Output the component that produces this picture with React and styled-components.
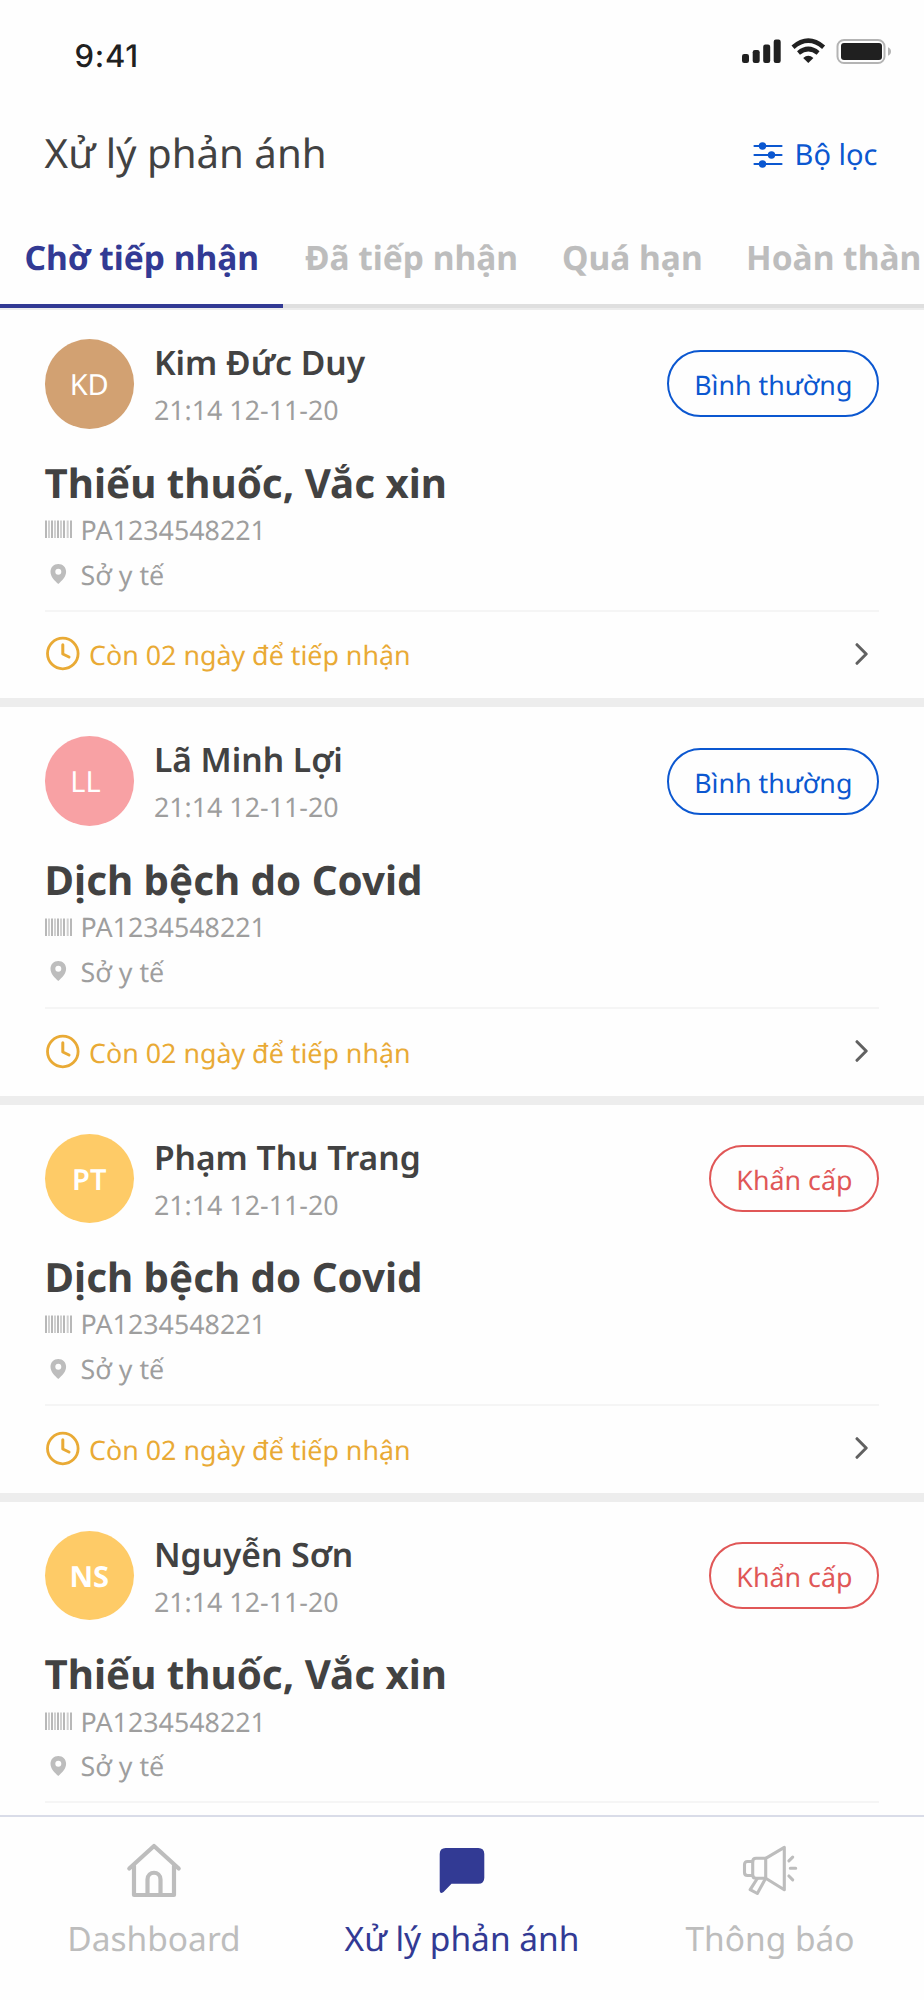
import styled, { createGlobalStyle } from "styled-components"

const GlobalStyle = createGlobalStyle`
    * {
        box-sizing: border-box;
    }

    body {
        margin: 0;
        background: #ffffff;
        font-family: "Noto Sans", "Open Sans", sans-serif;
        color: #424242;
        text-rendering: geometricPrecision;
    }
`

const Screen = styled.div`
    width: 924px;
    height: 2000px;
    display: flex;
    flex-direction: column;
    overflow: hidden;
    background: #fefefe;
`

const StatusBar = styled.div`
    height: 98px;
    flex: none;
    display: flex;
    justify-content: space-between;
    padding: 36px 31px 0 74.5px;
`

const Clock = styled.div`
    font-family: Inter, "Liberation Sans", sans-serif;
    font-size: 31px;
    font-weight: 500;
    line-height: 42px;
    letter-spacing: 0.8px;
    color: #202020;
`

const StatusIcons = styled.svg`
    width: 151px;
    height: 28px;
    display: block;
`

const Header = styled.header`
    height: 112px;
    flex: none;
    display: flex;
    align-items: flex-start;
    justify-content: space-between;
    padding: 25px 46.5px 0 44.6px;
`

const PageTitle = styled.h1`
    margin: 0;
    font-size: 40.2px;
    font-weight: 400;
    line-height: 59px;
`

const FilterButton = styled.div`
    display: flex;
    align-items: center;
    gap: 12px;
    padding-top: 3px;
    font-size: 29px;
    line-height: 58px;
    color: #0b57d0;
`

const Tabs = styled.nav`
    height: 100.3px;
    flex: none;
    display: flex;
    border-bottom: 2px solid #ececec;
    white-space: nowrap;
`

const Tab = styled.div`
    flex: none;
    height: 98px;
    padding: ${({ $active }) => ($active ? "22px 23px 0 24.5px" : "22px 21px 0 22px")};
    width: ${({ $width }) => $width}px;
    border-bottom: 4px solid ${({ $active }) => ($active ? "#323a94" : "#dfdfdf")};
    font-size: 33.5px;
    font-weight: 700;
    line-height: 50px;
    color: ${({ $active }) => ($active ? "#323a94" : "#bdbdbd")};
`

const List = styled.main`
    flex: 1;
    min-height: 0;
    overflow: hidden;
`

const Card = styled.article`
    height: 397.2px;
    padding: 29px 44.6px 0;
    border-bottom: 9px solid #ededed;
`

const CardHead = styled.div`
    display: flex;
    height: 89.3px;
`

const Avatar = styled.div`
    width: 89.3px;
    height: 89.3px;
    border-radius: 50%;
    background: ${({ $color }) => $color};
    font-size: 29px;
    font-weight: ${({ $weight }) => $weight};
    line-height: 92px;
    text-align: center;
    white-space: pre;
    color: #ffffff;
`

const Person = styled.div`
    flex: 1;
    padding-left: 20px;
`

const Name = styled.div`
    font-size: 33.6px;
    font-weight: 600;
    line-height: 47px;
`

const Time = styled.div`
    font-size: 26.8px;
    line-height: 48px;
    color: #9e9e9e;
`

const Badge = styled.div`
    align-self: center;
    height: 67px;
    padding: 0 25px;
    border: 2px solid ${({ $urgent }) => ($urgent ? "#e05757" : "#0b57d0")};
    border-radius: 34px;
    font-size: 26.8px;
    line-height: 65px;
    color: ${({ $urgent }) => ($urgent ? "#e05757" : "#0b57d0")};
`

const Subject = styled.h2`
    margin: 25px 0 0;
    font-size: 40.3px;
    font-weight: 700;
    line-height: 58px;
`

const MetaList = styled.div`
    height: 98.3px;
    margin-top: -4px;
`

const Meta = styled.div`
    display: flex;
    align-items: center;
    height: 44.8px;
    font-size: 26.8px;
    line-height: 44px;
    color: #9e9e9e;
`

const MetaIcon = styled.svg`
    flex: none;
    width: 27px;
    height: 20px;
    margin: 0 9px 1px 0;
`

const CardFoot = styled.div`
    height: 88px;
    margin-top: 4px;
    padding-right: 10px;
    padding-bottom: 2px;
    display: flex;
    align-items: center;
    border-top: 2px solid #f5f5f5;
    font-size: 26.8px;
    color: #e9aa35;
`

const FootIcon = styled.svg`
    flex: none;
    width: 35px;
    height: 35px;
`

const Deadline = styled.span`
    flex: 1;
    padding: 2px 0 0 9.5px;
`

const BottomNav = styled.footer`
    height: 185px;
    flex: none;
    display: grid;
    grid-template-columns: 1fr 1fr 1fr;
    border-top: 2px solid #d9dce8;
`

const NavItem = styled.div`
    display: flex;
    flex-direction: column;
    align-items: center;
    padding-top: 25px;
    font-size: 33.48px;
    line-height: 50px;
    color: ${({ $active }) => ($active ? "#323a94" : "#bdbdbd")};
`

const NavIcon = styled.svg`
    width: 60px;
    height: 60px;
    margin-bottom: 11px;
`

const tabs = [
    { name: "Chờ tiếp nhận", width: 283, active: true },
    { name: "Đã tiếp nhận", width: 257 },
    { name: "Quá hạn", width: 184 },
    { name: "Hoàn thàn", width: 260 },
]

const deadline = "Còn 02 ngày để tiếp nhận"

const reports = [
    { initials: "KD", weight: 400, color: "#d2a172", name: "Kim Đức Duy", subject: "Thiếu thuốc, Vắc xin", deadline },
    { initials: "LL ", weight: 400, color: "#f8a1a4", name: "Lã Minh Lợi", subject: "Dịch bệch do Covid", deadline },
    { initials: "PT", weight: 600, color: "#fecb67", name: "Phạm Thu Trang", subject: "Dịch bệch do Covid", urgent: true, deadline },
    { initials: "NS", weight: 700, color: "#fecb67", name: "Nguyễn Sơn", subject: "Thiếu thuốc, Vắc xin", urgent: true },
]

const bars = [0, 3, 6, 9, 12, 15, 18, 21.7, 25]

const SignalIcons = () => (
    <StatusIcons viewBox="0 0 151 28">
        <g fill="#202020">
            <rect x="0" y="18" width="7" height="9" rx="2.2" />
            <rect x="10.7" y="14" width="7" height="13" rx="2.2" />
            <rect x="21.2" y="8.5" width="7" height="18.5" rx="2.2" />
            <rect x="31.7" y="3.5" width="7" height="23.5" rx="2.2" />
            <path d="M66.3 27 L61.2 22 Q66.3 17.6 71.4 22 Z" />
            <rect x="99" y="7" width="41" height="17" rx="3" />
        </g>
        <path d="M51 11.2 Q66.3 -1.8 81.6 11.2" fill="none" stroke="#202020" strokeWidth="4.6" />
        <path d="M56.5 17 Q66.3 9 76.1 17" fill="none" stroke="#202020" strokeWidth="4.6" />
        <rect x="95.5" y="4" width="47" height="23" rx="6.5" fill="none" stroke="#b4b4b4" strokeWidth="2" />
        <path d="M146 11.3 Q149 12.5 149 15.5 Q149 18.5 146 19.7 Z" fill="#b4b4b4" />
    </StatusIcons>
)

const ReportCard = ({ report }) => (
    <Card>
        <CardHead>
            <Avatar $color={report.color} $weight={report.weight}>{report.initials}</Avatar>
            <Person>
                <Name>{report.name}</Name>
                <Time>21:14 12-11-20</Time>
            </Person>
            <Badge $urgent={report.urgent}>{report.urgent ? "Khẩn cấp" : "Bình thường"}</Badge>
        </CardHead>
        <Subject>{report.subject}</Subject>
        <MetaList>
            <Meta>
                <MetaIcon viewBox="0 0 27 20">
                    {bars.map((x, i) => (
                        <rect key={x} x={x} y="1.5" width="2" height="17.5" fill={i % 2 ? "#d0d0d0" : "#b8b8b8"} />
                    ))}
                </MetaIcon>
                PA1234548221
            </Meta>
            <Meta>
                <MetaIcon viewBox="0 0 27 20">
                    <path d="M13.3 0 C8.8 0 5.5 3.4 5.5 7.7 C5.5 12.7 9.5 16.4 13.3 20 C17.1 16.4 21.1 12.7 21.1 7.7 C21.1 3.4 17.8 0 13.3 0 Z M13.3 4.7 A3 3 0 1 1 13.3 10.7 A3 3 0 1 1 13.3 4.7 Z" fill="#bdbdbd" fillRule="evenodd" />
                </MetaIcon>
                Sở y tế
            </Meta>
        </MetaList>
        <CardFoot>
            {report.deadline && (
                <>
                    <FootIcon viewBox="0 0 35 35" fill="none" stroke="#e9aa35" strokeLinecap="round" strokeLinejoin="round">
                        <circle cx="17.8" cy="17.5" r="15.3" strokeWidth="2.8" />
                        <path d="M17.8 8.8 V18 L24 21" strokeWidth="3" />
                    </FootIcon>
                    <Deadline>{report.deadline}</Deadline>
                    <svg width="14" height="22" viewBox="0 0 14 22" fill="none" stroke="#616161" strokeWidth="3" strokeLinecap="round" strokeLinejoin="round">
                        <path d="M2 1.700 L11.200 11 L2 20.300" />
                    </svg>
                </>
            )}
        </CardFoot>
    </Card>
)

export default function App() {
    return (
        <Screen>
            <GlobalStyle />
            <StatusBar>
                <Clock>9:41</Clock>
                <SignalIcons />
            </StatusBar>
            <Header>
                <PageTitle>Xử lý phản ánh</PageTitle>
                <FilterButton>
                    <svg width="30" height="26" viewBox="0 0 30 26" fill="#0b57d0" stroke="#0b57d0" strokeWidth="2.2" strokeLinecap="round">
                        <path d="M1.5 4 H28.5 M1.5 13 H28.5 M1.5 22 H28.5" />
                        <circle cx="9.5" cy="4" r="2.6" />
                        <circle cx="18.5" cy="13" r="2.6" />
                        <circle cx="9.5" cy="22" r="2.6" />
                    </svg>
                    Bộ lọc
                </FilterButton>
            </Header>
            <Tabs>
                {tabs.map((tab) => (
                    <Tab key={tab.name} $active={tab.active} $width={tab.width}>{tab.name}</Tab>
                ))}
            </Tabs>
            <List>
                {reports.map((report) => <ReportCard key={report.name} report={report} />)}
            </List>
            <BottomNav>
                <NavItem>
                    <NavIcon viewBox="0 0 60 60" fill="none" stroke="#bdbdbd" strokeWidth="4.2" strokeLinecap="round" strokeLinejoin="round">
                        <path d="M5.3 26.5 L30 4 L54.7 26.5" />
                        <path d="M10 24 V53 H50 V24" />
                        <path d="M23.5 53 V37.5 C23.5 28.5 36.5 28.5 36.5 37.5 V53" />
                    </NavIcon>
                    Dashboard
                </NavItem>
                <NavItem $active>
                    <NavIcon viewBox="0 0 60 60">
                        <path d="M13.7 6 H46.3 Q52.3 6 52.3 12 V35.7 Q52.3 41.7 46.3 41.7 H19.5 L11.5 50 Q7.7 52.5 7.7 48.5 V12 Q7.7 6 13.7 6 Z" fill="#323a94" />
                    </NavIcon>
                    Xử lý phản ánh
                </NavItem>
                <NavItem>
                    <NavIcon viewBox="0 0 60 60" fill="none" stroke="#bdbdbd" strokeWidth="3.1" strokeLinecap="round" strokeLinejoin="round">
                        <path d="M25.7 16.3 L44.3 5.3 V47.7 L25.7 36.3 Z" />
                        <path d="M25.7 16.3 H16 Q12.7 16.3 12.7 19.5 V33 Q12.7 36.3 16 36.3 H25.7" />
                        <path d="M12.7 19.5 H7.5 Q4.5 19.5 4.5 22.5 V30.5 Q4.5 33.5 7.5 33.5 H12.7" />
                        <path d="M17 37 L10.2 47.7 L17.3 51.5 L25 37.5" />
                        <path d="M48.9 18.9 L52.7 15.2 M50.3 26.3 H55.7 M48.9 34 L52.7 37.8" />
                    </NavIcon>
                    Thông báo
                </NavItem>
            </BottomNav>
        </Screen>
    )
}
